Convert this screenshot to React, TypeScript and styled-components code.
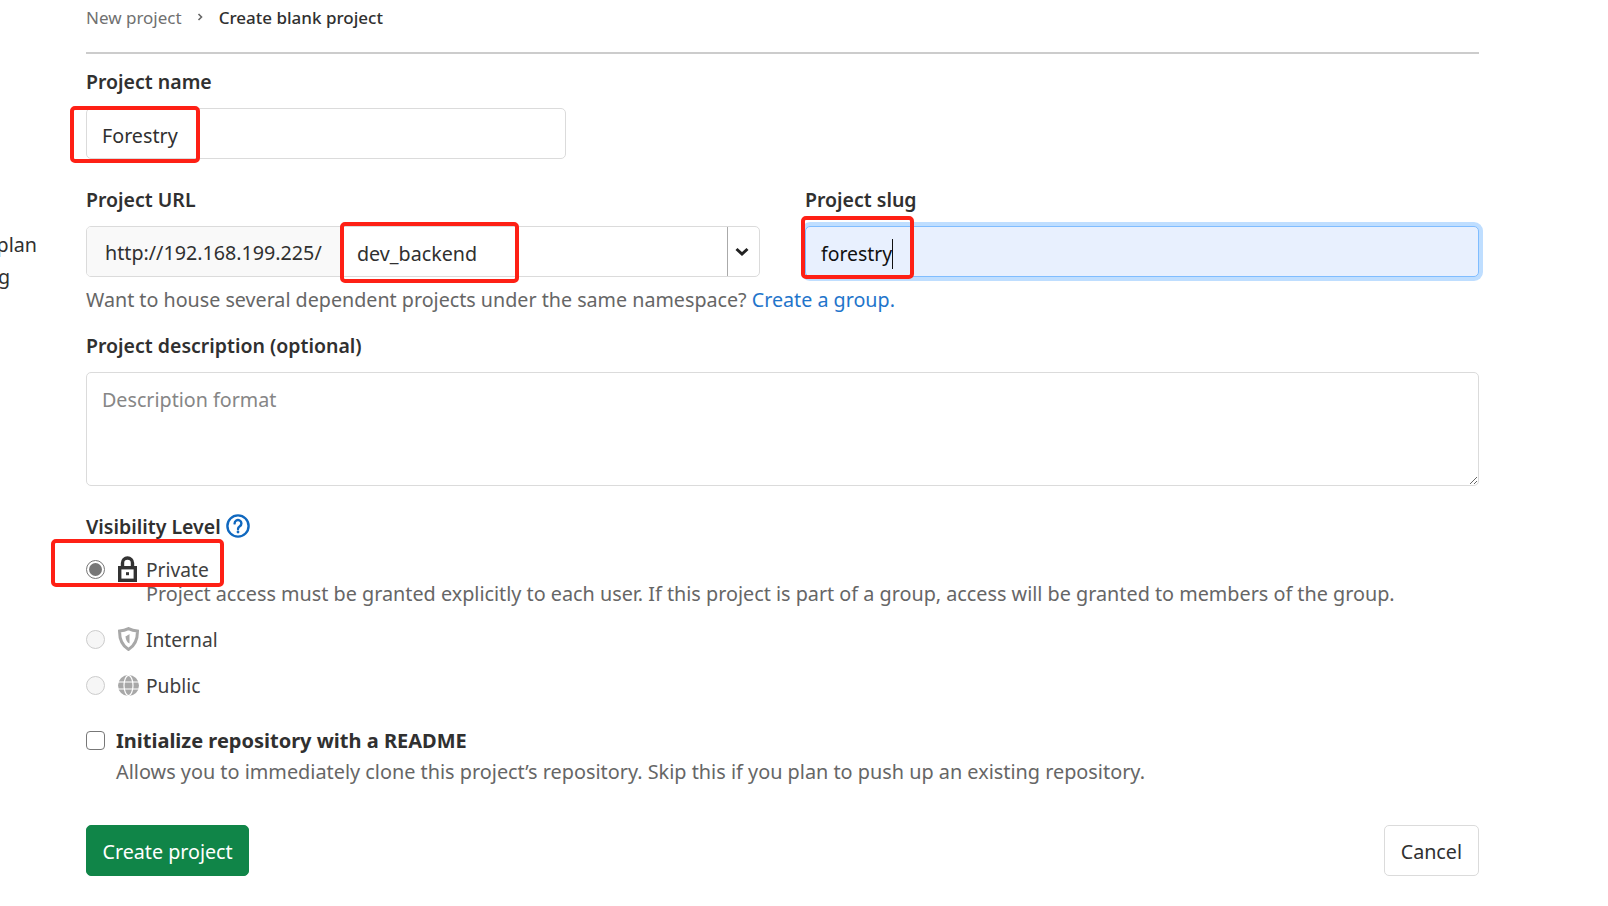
import styled, { createGlobalStyle } from "styled-components";

const GlobalStyle = createGlobalStyle`
  html, body {
    margin: 0;
    padding: 0;
    background: #fff;
    overflow: hidden;
  }
  body {
    font-family: "Noto Sans", "Open Sans", "Liberation Sans", sans-serif;
    color: #303030;
  }
`;

const Page = styled.div`
  display: flex;
  width: 1608px;
  height: 906px;
`;

const Sidebar = styled.div`
  flex: 0 0 86px;
  box-sizing: border-box;
  overflow: hidden;
  display: flex;
  flex-direction: column;
  align-items: flex-end;
  padding: 229px 49px 0 0;
  font-size: 19.7px;
  line-height: 32px;
  color: #303030;
`;

const SideText = styled.span<{ $shift?: number }>`
  margin-right: ${(p) => p.$shift ?? 0}px;
`;

const Main = styled.main`
  flex: 0 0 1393px;
  font-size: 19.7px;
`;

const Breadcrumb = styled.nav`
  display: flex;
  align-items: center;
  height: 34px;
  font-size: 17px;
  border-bottom: 2px solid #ccc;
  padding-bottom: 18px;
`;

const Crumb = styled.span<{ $current?: boolean }>`
  color: ${(p) => (p.$current ? "#303030" : "#707070")};
  font-weight: ${(p) => (p.$current ? 500 : 400)};
`;

const CrumbSep = styled.span`
  display: flex;
  margin: 0 15px 0 14px;
  color: #666;
`;

const Label = styled.label<{ $top: number }>`
  display: block;
  margin-top: ${(p) => p.$top}px;
  height: 28px;
  line-height: 28px;
  font-size: 19.5px;
  font-weight: 600;
  color: #303030;
`;

const Row = styled.div`
  display: flex;
  gap: 45px;
`;

const Column = styled.div<{ $width: number }>`
  width: ${(p) => p.$width}px;
  flex: none;
`;

const Marked = styled.div`
  position: relative;
`;

const RedBox = styled.span<{ $l: number; $t: number; $w: number; $h: number }>`
  position: absolute;
  left: ${(p) => p.$l}px;
  top: ${(p) => p.$t}px;
  width: ${(p) => p.$w}px;
  height: ${(p) => p.$h}px;
  box-sizing: border-box;
  border: 4.5px solid #fe2015;
  border-radius: 5px;
  pointer-events: none;
  z-index: 2;
`;

const TextInput = styled.input<{ $width: number }>`
  display: block;
  box-sizing: border-box;
  width: ${(p) => p.$width}px;
  height: 51px;
  margin-top: 12px;
  padding: 4px 15px 0;
  border: 1px solid #dbdbdb;
  border-radius: 5px;
  font: inherit;
  font-size: 19.7px;
  color: #303030;
  background: #fff;
  outline: none;
`;

const UrlGroup = styled.div`
  display: flex;
  height: 51px;
  margin-top: 12px;
  box-sizing: border-box;
  border: 1px solid #dbdbdb;
  border-radius: 5px;
  position: relative;
`;

const UrlPrefix = styled.span`
  flex: 0 0 254px;
  box-sizing: border-box;
  display: flex;
  align-items: center;
  padding: 2px 0 0 18px;
  background: #f9f9f9;
  border-radius: 4px 0 0 4px;
  color: #303030;
  font-size: 19.7px;
`;

const Namespace = styled.span`
  flex: 1;
  display: flex;
  align-items: center;
  padding: 4px 0 0 16px;
  color: #303030;
`;

const Caret = styled.span`
  flex: 0 0 32px;
  box-sizing: border-box;
  padding-right: 3px;
  display: flex;
  align-items: center;
  justify-content: center;
  border-left: 1px solid #aaa;
`;

const SlugInput = styled.div`
  position: relative;
  box-sizing: border-box;
  height: 51px;
  margin-top: 12px;
  padding: 4px 0 0 15px;
  display: flex;
  align-items: center;
  background: #e8f0fe;
  border: 1px solid #80bdff;
  border-radius: 5px;
  box-shadow: 0 0 0 4px #bfdeff;
  font-size: 19.4px;
  color: #111;
`;

const TextCursor = styled.span`
  display: inline-block;
  width: 1px;
  height: 30px;
  background: #111;
`;

const Hint = styled.p`
  margin: 9px 0 0;
  height: 28px;
  line-height: 28px;
  font-size: 19.7px;
  color: #666;
`;

const Link = styled.a`
  color: #1f75cb;
  text-decoration: none;
`;

const Description = styled.textarea`
  display: block;
  box-sizing: border-box;
  width: 100%;
  height: 114px;
  margin-top: 12px;
  padding: 13px 15px;
  border: 1px solid #dbdbdb;
  border-radius: 5px;
  font: inherit;
  font-size: 19.7px;
  outline: none;
  &::placeholder {
    color: #868686;
    opacity: 1;
  }
`;

const LevelHeading = styled.div`
  display: flex;
  align-items: center;
  gap: 5px;
  height: 28px;
  margin-top: 26px;
  font-size: 19.5px;
  font-weight: 600;
`;

const Level = styled.div<{ $top: number }>`
  display: flex;
  align-items: center;
  height: 28px;
  margin-top: ${(p) => p.$top}px;
  font-size: 19.2px;
  color: #404040;
`;

const Radio = styled.span<{ $checked?: boolean }>`
  position: relative;
  flex: 0 0 19px;
  box-sizing: border-box;
  height: 19px;
  border: 1px solid ${(p) => (p.$checked ? "#777" : "#ccc")};
  border-radius: 50%;
  background: ${(p) => (p.$checked ? "#fff" : "#f6f6f6")};
  margin-right: 12px;
  &::after {
    content: "";
    display: ${(p) => (p.$checked ? "block" : "none")};
    position: absolute;
    inset: 2px;
    border-radius: 50%;
    background: #777;
  }
`;

const LevelIcon = styled.span`
  flex: 0 0 29px;
  box-sizing: border-box;
  padding-left: 1px;
  display: flex;
  align-items: center;
`;

const LevelDesc = styled.p`
  margin: -3px 0 0 60px;
  height: 28px;
  line-height: 28px;
  font-size: 19.8px;
  color: #666;
`;

const CheckRow = styled.div`
  display: flex;
  align-items: center;
  gap: 11px;
  height: 28px;
  margin-top: 27px;
`;

const Checkbox = styled.span`
  flex: 0 0 19px;
  box-sizing: border-box;
  height: 19px;
  border: 1px solid #777;
  border-radius: 4px;
  background: #fff;
`;

const CheckLabel = styled.span`
  font-size: 20px;
  font-weight: 700;
  color: #303030;
`;

const CheckDesc = styled.p`
  margin: 4px 0 0 30px;
  height: 28px;
  line-height: 28px;
  font-size: 19.85px;
  color: #666;
`;

const Actions = styled.div`
  display: flex;
  justify-content: space-between;
  margin-top: 39px;
`;

const Button = styled.button<{ $primary?: boolean }>`
  height: 51px;
  padding: 2px ${(p) => (p.$primary ? "15.5px" : "16px")} 0;
  box-sizing: border-box;
  border-radius: 5px;
  border: 1px solid ${(p) => (p.$primary ? "#108548" : "#dbdbdb")};
  background: ${(p) => (p.$primary ? "#108548" : "#fff")};
  color: ${(p) => (p.$primary ? "#fff" : "#303030")};
  font: inherit;
  font-size: 19.7px;
`;

const ChevronRight = () => (
  <svg width="8" height="10" viewBox="0 0 8 10" fill="none" stroke="currentColor" strokeWidth="1.6">
    <path d="M2.5 2l3 3-3 3" />
  </svg>
);

const ChevronDown = () => (
  <svg width="14" height="10" viewBox="0 0 14 10" fill="none" stroke="#222" strokeWidth="3">
    <path d="M1.5 2l5.5 5 5.5-5" />
  </svg>
);

const HelpIcon = () => (
  <svg width="24" height="24" viewBox="0 0 24 24" fill="none" stroke="#1068bf" strokeWidth="2.4">
    <circle cx="12" cy="12" r="10.6" />
    <path d="M8.6 9.4a3.4 3.4 0 1 1 5.2 2.9c-1.2.8-1.8 1.4-1.8 2.7" strokeLinecap="round" />
    <circle cx="12" cy="18" r="1.4" fill="#1068bf" stroke="none" />
  </svg>
);

const LockIcon = () => (
  <svg width="19" height="26" viewBox="0 0 19 26">
    <path d="M4.5 11V7a5 5 0 0 1 10 0v4" fill="none" stroke="#333" strokeWidth="3.4" />
    <rect x="1.7" y="11.7" width="15.6" height="12.6" fill="#fff" stroke="#333" strokeWidth="3.4" />
    <rect x="8" y="16.200" width="3" height="3" fill="#333" />
  </svg>
);

const ShieldIcon = () => (
  <svg width="21" height="24" viewBox="0 0 21 24">
    <path d="M10.500 1.600c3 1.600 5.800 2.300 9 2.500 0 8-2 14.400-9 18.400-7-4-9-10.400-9-18.400 3.200-.2 6-.9 9-2.500z" fill="none" stroke="#a8a8a8" strokeWidth="3" />
    <path d="M11.500 7v9.500c-2.500-1-3.800-3.800-4-7.200 1.400-.4 2.700-1.400 4-2.300z" fill="#a8a8a8" />
  </svg>
);

const GlobeIcon = () => (
  <svg width="21" height="21" viewBox="0 0 21 21">
    <circle cx="10.500" cy="10.500" r="10.500" fill="#a8a8a8" />
    <g fill="none" stroke="#fff" strokeWidth="1.200">
      <ellipse cx="10.500" cy="10.500" rx="4.500" ry="10" />
      <path d="M0 7h21M0 14h21" />
    </g>
  </svg>
);

const App = () => (
  <>
    <GlobalStyle />
    <Page>
      <Sidebar>
        <SideText>plan</SideText>
        <SideText $shift={27}>g</SideText>
      </Sidebar>
      <Main>
        <Breadcrumb>
          <Crumb>New project</Crumb>
          <CrumbSep>
            <ChevronRight />
          </CrumbSep>
          <Crumb $current>Create blank project</Crumb>
        </Breadcrumb>

        <Label $top={14}>Project name</Label>
        <Marked>
          <RedBox $l={-16} $t={-2} $w={130} $h={57} />
          <TextInput $width={480} defaultValue="Forestry" readOnly />
        </Marked>

        <Row>
          <Column $width={674}>
            <Label $top={27}>Project URL</Label>
            <Marked>
              <UrlGroup>
                <UrlPrefix>http://192.168.199.225/</UrlPrefix>
                <Namespace>dev_backend</Namespace>
                <Caret>
                  <ChevronDown />
                </Caret>
              </UrlGroup>
              <RedBox $l={254} $t={-4} $w={179} $h={61} />
            </Marked>
          </Column>
          <Column $width={674}>
            <Label $top={27}>Project slug</Label>
            <Marked>
              <SlugInput>
                forestry
                <TextCursor />
              </SlugInput>
              <RedBox $l={-4} $t={-10} $w={113} $h={63} />
            </Marked>
          </Column>
        </Row>

        <Hint>
          Want to house several dependent projects under the same namespace? <Link>Create a group.</Link>
        </Hint>

        <Label $top={18}>Project description (optional)</Label>
        <Description placeholder="Description format" readOnly />

        <LevelHeading>
          Visibility Level <HelpIcon />
        </LevelHeading>
        <Marked>
          <RedBox $l={-35} $t={-16} $w={173} $h={48} />
          <Level $top={15}>
            <Radio $checked />
            <LevelIcon>
              <LockIcon />
            </LevelIcon>
            Private
          </Level>
        </Marked>
        <LevelDesc>
          Project access must be granted explicitly to each user. If this project is part of a group, access will be
          granted to members of the group.
        </LevelDesc>
        <Level $top={17}>
          <Radio />
          <LevelIcon>
            <ShieldIcon />
          </LevelIcon>
          Internal
        </Level>
        <Level $top={18}>
          <Radio />
          <LevelIcon>
            <GlobeIcon />
          </LevelIcon>
          Public
        </Level>

        <CheckRow>
          <Checkbox />
          <CheckLabel>Initialize repository with a README</CheckLabel>
        </CheckRow>
        <CheckDesc>Allows you to immediately clone this project’s repository. Skip this if you plan to push up an existing repository.</CheckDesc>

        <Actions>
          <Button $primary>Create project</Button>
          <Button>Cancel</Button>
        </Actions>
      </Main>
    </Page>
  </>
);

export default App;
